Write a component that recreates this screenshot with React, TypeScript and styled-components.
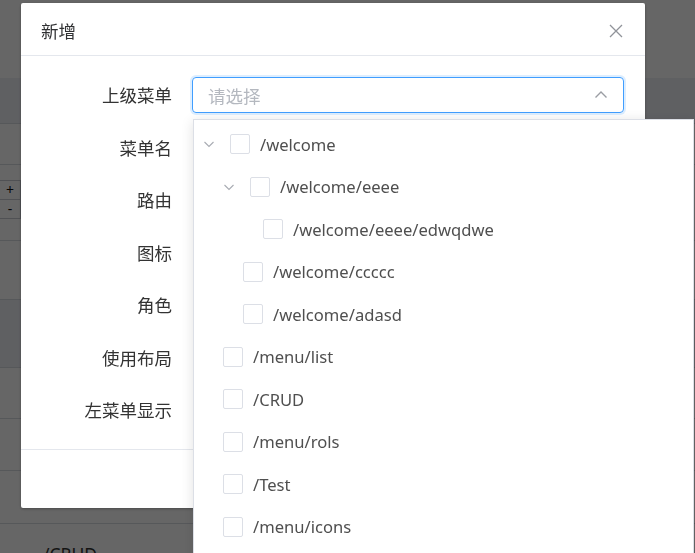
import React from 'react';
import styled, { createGlobalStyle } from 'styled-components';

const GlobalStyle = createGlobalStyle`
  html, body {
    margin: 0;
    padding: 0;
    overflow: hidden;
    background: #fff;
  }
  body {
    font-family: "Noto Sans", "Noto Sans CJK SC", sans-serif;
    color: #333;
  }
`;

const Page = styled.div`
  width: 695px;
  height: 553px;
  overflow: hidden;
  display: flex;
  flex-direction: column;
`;

const Toolbar = styled.div`
  height: 78px;
  flex: none;
  background: #fff;
`;

const TableHead = styled.div`
  height: 45px;
  flex: none;
  background: #eef0f6;
`;

const TableRow = styled.div<{ $h: number; $hover?: boolean }>`
  height: ${(p) => p.$h}px;
  flex: none;
  box-sizing: border-box;
  display: flex;
  align-items: center;
  padding-left: 43px;
  position: relative;
  border-top: 1px solid #d8dbe2;
  background: ${(p) => (p.$hover ? '#eef0f6' : '#fff')};
  font-size: 17.5px;
  color: #333;
`;

const StepButtons = styled.div`
  position: absolute;
  left: -1px;
  top: 16px;
  display: flex;
  flex-direction: column;
`;

const StepButton = styled.div`
  width: 20px;
  height: 18px;
  border: 1px solid #c8cbd2;
  margin-top: -1px;
  display: flex;
  align-items: center;
  justify-content: center;
  font-size: 14px;
  line-height: 1;
  color: #111;
`;

const Overlay = styled.div`
  position: fixed;
  inset: 0;
  background: rgba(0, 0, 0, 0.6);
`;

const Dialog = styled.div`
  position: fixed;
  left: 21px;
  top: 3px;
  width: 624px;
  background: #fff;
  border-radius: 2px;
  box-shadow: 0 1px 3px rgba(0, 0, 0, 0.3);
`;

const Header = styled.div`
  padding: 16px 20px 12px;
  border-bottom: 1px solid #e4e7ed;
  display: flex;
  align-items: center;
  justify-content: space-between;
`;

const Title = styled.span`
  font-size: 17.5px;
  line-height: 24px;
  color: #303133;
`;

const CloseButton = styled.button`
  border: 0;
  background: none;
  padding: 0;
  margin-right: 1px;
  width: 16px;
  height: 16px;
  display: flex;
  color: #909399;
  cursor: pointer;
`;

const Body = styled.div`
  padding: 21px 21px 21px 0;
  display: flex;
  flex-direction: column;
  gap: 16.5px;
`;

const FormRow = styled.div`
  display: flex;
  height: 36px;
  align-items: center;
`;

const Label = styled.label`
  width: 171px;
  padding-right: 20px;
  box-sizing: border-box;
  text-align: right;
  font-size: 17.5px;
  line-height: 36px;
  color: #333;
  flex: none;
`;

const SelectBox = styled.div`
  position: relative;
  flex: 1;
  height: 36px;
`;

const SelectInput = styled.div`
  height: 36px;
  box-sizing: border-box;
  border: 1px solid #409eff;
  border-radius: 4px;
  box-shadow: 0 0 0 2px rgba(64, 158, 255, 0.18);
  display: flex;
  align-items: center;
  justify-content: space-between;
  padding: 0 15px 0 15px;
`;

const Placeholder = styled.span`
  font-size: 17.5px;
  color: #b4b8bf;
`;

const Dropdown = styled.div`
  position: absolute;
  top: calc(100% + 6px);
  left: 1px;
  width: 501px;
  min-height: 480px;
  background: #fff;
  border: 1px solid #dcdfe6;
  box-shadow: 0 2px 12px rgba(0, 0, 0, 0.12);
  padding: 3px 0 0 6px;
  box-sizing: border-box;
  z-index: 10;
`;

const TreeRow = styled.div<{ $level: number }>`
  height: 42.5px;
  display: flex;
  align-items: center;
  padding-left: ${(p) => (p.$level - 1) * 20}px;
`;

const Switcher = styled.span<{ $leaf: boolean }>`
  width: ${(p) => (p.$leaf ? 23 : 30)}px;
  flex: none;
  display: flex;
  align-items: center;
  padding-left: 3px;
  box-sizing: border-box;
  color: #a8abb2;
`;

const Checkbox = styled.span`
  width: 20px;
  height: 20px;
  box-sizing: border-box;
  border: 1px solid #dcdfe6;
  border-radius: 2px;
  background: #fff;
  flex: none;
`;

const TreeText = styled.span`
  margin-left: 10px;
  font-size: 16.6px;
  color: #4f4f4f;
  white-space: nowrap;
`;

const Footer = styled.div`
  height: 58px;
  border-top: 1px solid #e4e7ed;
  display: flex;
  align-items: center;
  justify-content: flex-end;
  gap: 12px;
  padding-right: 21px;
`;

const FooterButton = styled.button<{ $primary?: boolean }>`
  height: 36px;
  padding: 0 20px;
  border-radius: 4px;
  font-size: 15px;
  border: 1px solid ${(p) => (p.$primary ? '#409eff' : '#dcdfe6')};
  background: ${(p) => (p.$primary ? '#409eff' : '#fff')};
  color: ${(p) => (p.$primary ? '#fff' : '#606266')};
`;

const labels = ['上级菜单', '菜单名', '路由', '图标', '角色', '使用布局', '左菜单显示'];

const tree = [
  { label: '/welcome', level: 1, leaf: false },
  { label: '/welcome/eeee', level: 2, leaf: false },
  { label: '/welcome/eeee/edwqdwe', level: 3, leaf: true },
  { label: '/welcome/ccccc', level: 2, leaf: true },
  { label: '/welcome/adasd', level: 2, leaf: true },
  { label: '/menu/list', level: 1, leaf: true },
  { label: '/CRUD', level: 1, leaf: true },
  { label: '/menu/rols', level: 1, leaf: true },
  { label: '/Test', level: 1, leaf: true },
  { label: '/menu/icons', level: 1, leaf: true },
];

const Caret = () => (
  <svg width="12" height="12" viewBox="0 0 12 12" fill="none">
    <path d="M1.5 4 L6 8.5 L10.5 4" stroke="currentColor" strokeWidth="1.1" />
  </svg>
);

const App = () => {
  return (
    <>
      <GlobalStyle />
      <Page>
        <Toolbar />
        <TableHead />
        <TableRow $h={41} />
        <TableRow $h={76}>
          <StepButtons>
            <StepButton>+</StepButton>
            <StepButton>-</StepButton>
          </StepButtons>
        </TableRow>
        <TableRow $h={59} />
        <TableRow $h={68} $hover />
        <TableRow $h={51} />
        <TableRow $h={52} />
        <TableRow $h={53} />
        <TableRow $h={60}>/CRUD</TableRow>
      </Page>
      <Overlay />
      <Dialog>
        <Header>
          <Title>新增</Title>
          <CloseButton type="button">
            <svg width="16" height="16" viewBox="0 0 16 16" fill="none">
              <path d="M2 2 L14 14 M14 2 L2 14" stroke="currentColor" strokeWidth="1.3" />
            </svg>
          </CloseButton>
        </Header>
        <Body>
          {labels.map((label, i) => (
            <FormRow key={label}>
              <Label>{label}</Label>
              {i === 0 && (
                <SelectBox>
                  <SelectInput>
                    <Placeholder>请选择</Placeholder>
                    <svg width="14" height="14" viewBox="0 0 14 14" fill="none">
                      <path d="M1.5 9.5 L7 4 L12.5 9.5" stroke="#9a9da3" strokeWidth="1.4" />
                    </svg>
                  </SelectInput>
                  <Dropdown>
                    {tree.map((node) => (
                      <TreeRow key={node.label} $level={node.level}>
                        <Switcher $leaf={node.leaf}>{!node.leaf && <Caret />}</Switcher>
                        <Checkbox />
                        <TreeText>{node.label}</TreeText>
                      </TreeRow>
                    ))}
                  </Dropdown>
                </SelectBox>
              )}
            </FormRow>
          ))}
        </Body>
        <Footer>
          <FooterButton type="button">取 消</FooterButton>
          <FooterButton type="button" $primary>确 定</FooterButton>
        </Footer>
      </Dialog>
    </>
  );
};

export default App;
